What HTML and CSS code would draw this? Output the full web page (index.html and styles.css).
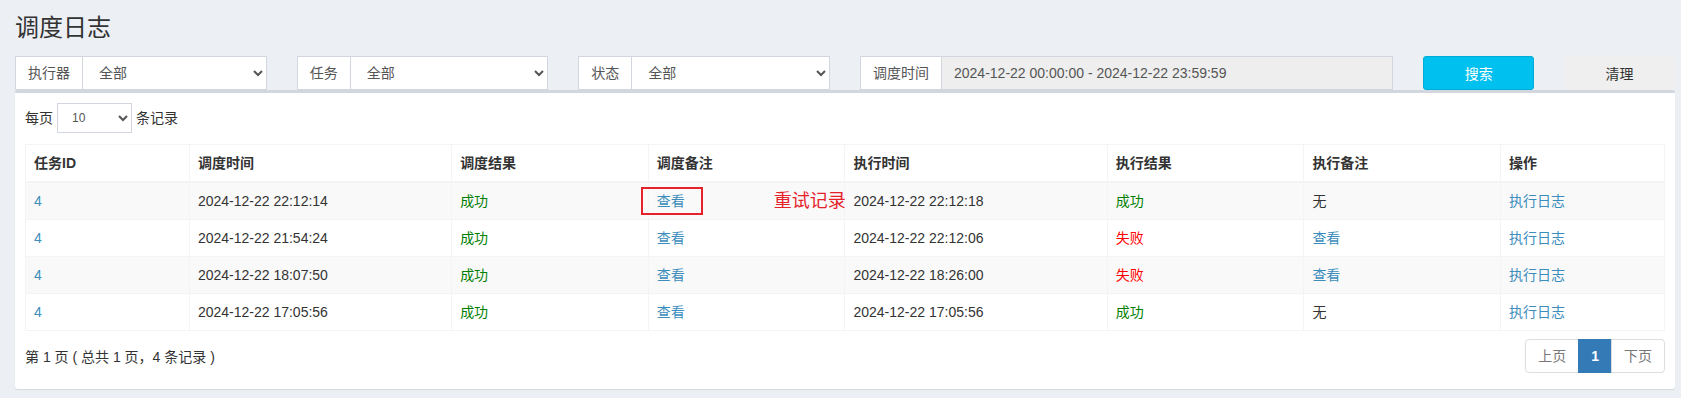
FILE: index.html
```
<!DOCTYPE html>
<html lang="zh-CN">

<head>
  <meta charset="UTF-8">
  <meta name="viewport" content="width=device-width, initial-scale=1.0">
  <title>调度日志</title>
  <link rel="stylesheet" href="styles.css">
</head>

<body>

  <div class="wrapper">

    <!-- 标题 -->
    <section class="content-header">
      <h1>调度日志</h1>
    </section>

    <section class="content">

      <!-- 搜索条件 -->
      <div class="filter">
        <div class="input-group col-2">
          <span class="addon">执行器</span>
          <select class="form-control">
            <option>全部</option>
          </select>
        </div>
        <div class="input-group col-2">
          <span class="addon">任务</span>
          <select class="form-control">
            <option>全部</option>
          </select>
        </div>
        <div class="input-group col-2">
          <span class="addon">状态</span>
          <select class="form-control">
            <option>全部</option>
          </select>
        </div>
        <div class="input-group col-4">
          <span class="addon">调度时间</span>
          <input class="form-control" type="text" readonly value="2024-12-22 00:00:00 - 2024-12-22 23:59:59">
        </div>
        <button class="btn btn-info col-1">搜索</button>
        <button class="btn btn-nomal col-1">清理</button>
      </div>

      <!-- 日志列表 -->
      <div class="box">
        <div class="box-body">

          <div class="length">
            每页
            <select class="input-sm">
              <option>10</option>
            </select>
            条记录
          </div>

          <table class="table">
            <colgroup>
              <col style="width: 10%">
              <col style="width: 16%">
              <col style="width: 12%">
              <col style="width: 12%">
              <col style="width: 16%">
              <col style="width: 12%">
              <col style="width: 12%">
              <col style="width: 10%">
            </colgroup>
            <thead>
              <tr>
                <th>任务ID</th>
                <th>调度时间</th>
                <th>调度结果</th>
                <th>调度备注</th>
                <th>执行时间</th>
                <th>执行结果</th>
                <th>执行备注</th>
                <th>操作</th>
              </tr>
            </thead>
            <tbody>
              <tr>
                <td><a href="#">4</a></td>
                <td>2024-12-22 22:12:14</td>
                <td class="ok">成功</td>
                <td class="mark">
                  <a href="#">查看</a>
                  <!-- 标注 -->
                  <span class="mark-box"></span>
                  <span class="mark-text">重试记录</span>
                </td>
                <td>2024-12-22 22:12:18</td>
                <td class="ok">成功</td>
                <td>无</td>
                <td><a href="#">执行日志</a></td>
              </tr>
              <tr>
                <td><a href="#">4</a></td>
                <td>2024-12-22 21:54:24</td>
                <td class="ok">成功</td>
                <td><a href="#">查看</a></td>
                <td>2024-12-22 22:12:06</td>
                <td class="fail">失败</td>
                <td><a href="#">查看</a></td>
                <td><a href="#">执行日志</a></td>
              </tr>
              <tr>
                <td><a href="#">4</a></td>
                <td>2024-12-22 18:07:50</td>
                <td class="ok">成功</td>
                <td><a href="#">查看</a></td>
                <td>2024-12-22 18:26:00</td>
                <td class="fail">失败</td>
                <td><a href="#">查看</a></td>
                <td><a href="#">执行日志</a></td>
              </tr>
              <tr>
                <td><a href="#">4</a></td>
                <td>2024-12-22 17:05:56</td>
                <td class="ok">成功</td>
                <td><a href="#">查看</a></td>
                <td>2024-12-22 17:05:56</td>
                <td class="ok">成功</td>
                <td>无</td>
                <td><a href="#">执行日志</a></td>
              </tr>
            </tbody>
          </table>

          <div class="table-footer">
            <div class="info">第 1 页 ( 总共 1 页，4 条记录 )</div>
            <ul class="pagination">
              <li class="disabled"><a href="#">上页</a></li>
              <li class="active"><a href="#">1</a></li>
              <li class="disabled"><a href="#">下页</a></li>
            </ul>
          </div>

        </div>
      </div>

    </section>

  </div>

</body>

</html>
```

FILE: styles.css
```
* {
  margin: 0;
  padding: 0;
  box-sizing: border-box;
}

html,
body {
  overflow: hidden;
}

body {
  background-color: #ecf0f5;
  font-family: "Liberation Sans", "Noto Sans CJK SC", sans-serif;
  font-size: 14px;
  line-height: 20px;
  color: #333;
}

a {
  color: #3c8dbc;
  text-decoration: none;
}

/* 页面比窗口略宽，右侧被裁掉一点 */
.wrapper {
  width: 1690px;
}

.content-header {
  padding: 15px 15px 0;
}

.content-header h1 {
  font-size: 24px;
  line-height: 26px;
  font-weight: normal;
}

.content {
  padding: 15px;
}

/* 搜索条件：12 栅格 */
.filter {
  display: grid;
  grid-template-columns: repeat(12, minmax(0, 1fr));
  column-gap: 30px;
  height: 34px;
}

.col-1 {
  grid-column: span 1;
}

.col-2 {
  grid-column: span 2;
}

.col-4 {
  grid-column: span 4;
}

.input-group {
  display: flex;
  height: 34px;
  min-width: 0;
}

.input-group .addon {
  flex: none;
  padding: 6px 12px;
  border: 1px solid #d2d6de;
  border-right: 0;
  background-color: #fff;
  color: #555;
  font-size: 14px;
  line-height: 20px;
}

.form-control {
  flex: 1;
  width: 0;
  min-width: 0;
  height: 34px;
  padding: 6px 12px;
  border: 1px solid #d2d6de;
  border-radius: 0;
  background-color: #fff;
  color: #555;
  font-family: inherit;
  font-size: 14px;
  outline: none;
}

input.form-control[readonly] {
  background-color: #eee;
}

.btn {
  width: 100%;
  min-width: 0;
  height: 34px;
  border: 1px solid transparent;
  border-radius: 3px;
  font-family: inherit;
  font-size: 14px;
  cursor: pointer;
}

.btn-info {
  background-color: #00c0ef;
  border-color: #00acd6;
  color: #fff;
}

/* 没有定义的样式，保留浏览器默认底色 */
.btn-nomal {
  background-color: #efefef;
  color: #333;
}

/* 列表盒子 */
.box {
  background-color: #fff;
  border-top: 3px solid #d2d6de;
  border-radius: 3px;
  box-shadow: 0 1px 1px rgba(0, 0, 0, .1);
}

.box-body {
  padding: 10px 10px 16px;
}

.length {
  display: flex;
  align-items: center;
  gap: 4px;
  height: 30px;
}

.input-sm {
  width: 75px;
  height: 30px;
  padding: 5px 10px;
  border: 1px solid #d2d6de;
  border-radius: 0;
  background-color: #fff;
  color: #555;
  font-family: inherit;
  font-size: 12px;
  outline: none;
}

.table {
  width: 100%;
  margin-top: 11px;
  border-collapse: collapse;
  table-layout: fixed;
  border: 1px solid #f4f4f4;
}

.table th,
.table td {
  padding: 8px;
  border: 1px solid #f4f4f4;
  text-align: left;
  line-height: 20px;
  white-space: nowrap;
}

.table th {
  border-bottom-width: 2px;
  font-weight: bold;
}

.table tbody tr:nth-child(odd) {
  background-color: #f9f9f9;
}

.ok {
  color: green;
}

.fail {
  color: red;
}

/* 截图上的红色标注 */
.mark {
  position: relative;
  overflow: visible;
}

.mark-box {
  position: absolute;
  left: -8px;
  top: 4px;
  width: 62px;
  height: 28px;
  border: 2px solid #e6212a;
}

.mark-text {
  position: absolute;
  left: 125px;
  top: 7px;
  color: #e6212a;
  font-size: 18px;
  line-height: 22px;
}

/* 分页 */
.table-footer {
  display: flex;
  justify-content: space-between;
  margin-top: 8px;
}

.info {
  padding-top: 8px;
}

.pagination {
  display: flex;
  list-style: none;
}

.pagination li a {
  display: block;
  padding: 6px 12px;
  margin-left: -1px;
  border: 1px solid #ddd;
  background-color: #fff;
  color: #777;
  line-height: 20px;
}

.pagination li:first-child a {
  margin-left: 0;
  border-radius: 4px 0 0 4px;
}

.pagination li:last-child a {
  border-radius: 0 4px 4px 0;
}

.pagination li.active a {
  background-color: #337ab7;
  border-color: #337ab7;
  color: #fff;
  font-weight: bold;
}
```
